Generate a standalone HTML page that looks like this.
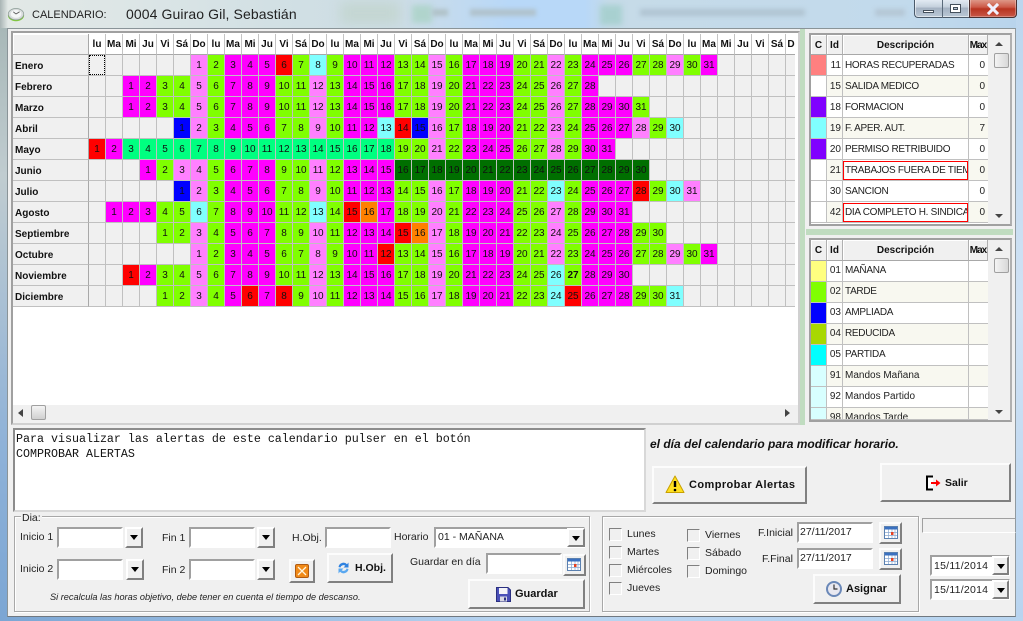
<!DOCTYPE html>
<html lang="es"><head><meta charset="utf-8"><title>Calendario</title>
<style>
html,body{margin:0;padding:0}
body{width:1023px;height:621px;overflow:hidden;position:relative;background:#b4d0ec;font:10px/12px "Liberation Sans",sans-serif;color:#111}
div,span,svg{position:absolute;white-space:nowrap}
.t{font-size:10.5px;line-height:12px;color:#222}
.in{background:#fff;box-sizing:border-box;border:2px solid;border-color:#a0a0a0 #fff #fff #a0a0a0}
.dd{box-sizing:border-box;width:18px;height:21px;background:#f0f0f0;border:2px solid;border-color:#fff #808080 #808080 #fff}
.dd:after{content:"";position:absolute;left:3px;top:6px;border:4px solid transparent;border-top:5px solid #000;border-bottom:0}
.btn{box-sizing:border-box;background:#f0f0f0;border:2px solid;border-color:#fcfcfc #808080 #808080 #fcfcfc;font-weight:bold;color:#111}
.gb{box-sizing:border-box;border:1px solid #a8a8a8;box-shadow:1px 1px 0 #fff,inset 1px 1px 0 #fff}
.cb{box-sizing:border-box;width:13px;height:13px;background:#f0f0f0;border:1px solid;border-color:#808080 #fff #fff #808080}
.hd{left:89px;top:34px;width:706px;height:21px;overflow:hidden;display:flex}
.hd i{flex:0 0 17px;box-sizing:border-box;height:21px;border-right:1px solid #c4c4c4;border-bottom:1px solid #a8a8a8;box-shadow:inset 1px 1px 0 #fff;font:bold 10px/22px "Liberation Sans",sans-serif;text-align:center;color:#111}
.rw{left:89px;width:706px;height:21px;overflow:hidden;box-sizing:border-box;border-bottom:1px solid #c0c0c0;background:repeating-linear-gradient(90deg,#f0f0f0 0 16px,#c0c0c0 16px 17px);font-size:0}
.rw b{display:inline-block;width:16px;height:20px;margin-right:1px;vertical-align:top;font:10px/21px "Liberation Sans",sans-serif;text-align:center;color:#111}
.m{background:#f0f}.g{background:#80ff00}.p{background:#ff80ff}.r{background:#f00}
.u{background:#00f}.c{background:#80ffff}.s{background:#00ff80}.d{background:#006f00}.o{background:#ff8000}
.lb{left:13px;width:76px;height:21px;box-sizing:border-box;background:#f0f0f0;border-right:1px solid #a8a8a8;border-bottom:1px solid #c0c0c0;font:bold 10px/24px "Liberation Sans",sans-serif;padding-left:2px;color:#111}
.sb{background:#f0f0f0}
.th{box-sizing:border-box;height:21px;background:#f0f0f0;border-right:1px solid #b0b0b0;border-bottom:1px solid #a8a8a8;box-shadow:inset 1px 1px 0 #fff;font:bold 10px/22px "Liberation Sans",sans-serif;text-align:center;color:#111}
.mx{font-size:10px;letter-spacing:-1px}
.tr{left:811px;width:177px;height:21px;overflow:hidden;box-sizing:border-box;border-bottom:1px solid #c0c0c0;font-size:10px;line-height:22px;color:#222}
.q{line-height:20px}
.tr span{top:0;height:20px}
.tr .k{left:0;width:15px}
.tr .n{left:17px;width:13px;text-align:right}
.tr .e{left:34px;width:124px;overflow:hidden}
.tr .x{left:158px;width:19px;text-align:right;box-sizing:border-box;padding-right:3px}
.tr .l1{left:15px;width:1px;background:#c0c0c0}.tr .l2{left:31px;width:1px;background:#c0c0c0}.tr .l3{left:157px;width:1px;background:#c0c0c0}
.w{background:#fff}.y{background:#f8f8f0}
.cp{letter-spacing:-.3px}
.rb{left:843px;width:125px;height:19px;box-sizing:border-box;border:1px solid #f00}
</style></head><body>

<!-- blurred desktop in title bar -->
<div style="left:0;top:0;width:1023px;height:28px;background:linear-gradient(90deg,#a8b4b4 0,#e2e8e6 8px,#dde6e6 120px,#d0dfe4 300px,#cddde6 400px,#b8d8f8 510px,#b8d8f8 585px,#c6dbe8 610px,#c2daec 900px,#b8d4ec 1023px)"></div>
<div style="left:340px;top:2px;width:60px;height:22px;background:#c4d6d2;filter:blur(6px)"></div>
<div style="left:412px;top:5px;width:20px;height:18px;background:#b0d4cc;filter:blur(3px)"></div>
<div style="left:432px;top:9px;width:16px;height:7px;background:#b0c2c8;filter:blur(2px)"></div>
<div style="left:470px;top:9px;width:66px;height:7px;background:#b0c2cc;filter:blur(2px)"></div>
<div style="left:600px;top:5px;width:22px;height:20px;background:#a8d0d0;filter:blur(3px)"></div>
<div style="left:640px;top:9px;width:165px;height:7px;background:#b0c4d2;filter:blur(2.5px)"></div>
<div style="left:875px;top:9px;width:30px;height:7px;background:#b4c6d4;filter:blur(2.5px)"></div>
<!-- side bands -->
<div style="left:0;top:28px;width:7px;height:593px;background:linear-gradient(180deg,#a8b8b8 0,#c0ccd0 25%,#8fb2d8 70%,#7ba6d4 100%)"></div>
<div style="left:1016px;top:0;width:7px;height:621px;background:linear-gradient(180deg,#bcd6ee,#d0e2f4 50%,#b8d4f0)"></div>
<div style="left:0;top:617px;width:1023px;height:4px;background:linear-gradient(90deg,#7ba6d4,#b8d4f0 50%,#b9d5f0)"></div>

<!-- caption buttons -->
<div style="left:914px;top:-2px;width:55px;height:20px;box-sizing:border-box;border:1px solid #4a5a6a;border-right:0;border-radius:0 0 0 4px;background:linear-gradient(180deg,#e6eef6,#c4d0dc 45%,#a4b2c2 50%,#bac8d6);box-shadow:inset 0 0 0 1px rgba(255,255,255,.55)"></div>
<div style="left:942px;top:0;width:1px;height:18px;background:#5a6a7a"></div>
<div style="left:923px;top:10px;width:11px;height:3px;box-sizing:border-box;background:#fff;border:1px solid #44505c"></div>
<div style="left:950px;top:4px;width:11px;height:9px;box-sizing:border-box;background:#fff;border:1px solid #44505c"></div>
<div style="left:953px;top:7px;width:5px;height:3px;box-sizing:border-box;background:#b8c6d4;border:1px solid #44505c"></div>
<div style="left:969px;top:-2px;width:48px;height:20px;box-sizing:border-box;border:1px solid #4a3030;border-radius:0 0 4px 0;background:linear-gradient(180deg,#e0a090,#cc5a48 45%,#b83420 55%,#c85848);box-shadow:inset 0 0 0 1px rgba(255,255,255,.3)"></div>
<svg style="left:986px;top:3px" width="14" height="12" viewBox="0 0 14 12"><path d="M2 1 L12 11 M12 1 L2 11" stroke="#fff" stroke-width="3"/><path d="M2 1 L12 11 M12 1 L2 11" stroke="#eef" stroke-width="2"/></svg>

<!-- app icon + title -->
<svg style="left:7px;top:7px" width="18" height="15" viewBox="0 0 20 16"><ellipse cx="10" cy="9" rx="9" ry="6.5" fill="#7fc93a"/><ellipse cx="10" cy="7.6" rx="8.6" ry="6.3" fill="#d8dcdc" stroke="#8a9a94" stroke-width=".8"/><ellipse cx="10" cy="7.4" rx="6" ry="4.4" fill="#f4f6f6"/><path d="M10 7.5 L14 5 M10 7.5 L7 5" stroke="#555" stroke-width="1"/></svg>
<span style="left:32px;top:8px;font-size:11px;line-height:14px;color:#222">CALENDARIO:</span>
<span style="left:126px;top:6px;font-size:14px;line-height:16px;color:#222;letter-spacing:.1px">0004 Guirao Gil, Sebastián</span>

<!-- client area -->
<div style="left:7px;top:28px;width:1009px;height:589px;box-sizing:border-box;background:#f0f0f0;border:1px solid #8a9498;border-right-color:#909aa0;border-bottom-color:#707880"></div>
<div style="left:800px;top:29px;width:5px;height:396px;background:#c0dcc0"></div>
<div style="left:806px;top:229px;width:207px;height:6px;background:#c0dcc0"></div>

<!-- calendar grid frame -->
<div style="left:11px;top:31px;width:789px;height:394px;box-sizing:border-box;background:#fff;border:2px solid;border-color:#a0a0a0 #d0d0d0 #d0d0d0 #a0a0a0"></div>
<div style="left:13px;top:34px;width:76px;height:21px;box-sizing:border-box;background:#f0f0f0;border-right:1px solid #a8a8a8;border-bottom:1px solid #a8a8a8;box-shadow:inset 1px 1px 0 #fff"></div>
<div class="hd"><i>lu</i><i>Ma</i><i>Mi</i><i>Ju</i><i>Vi</i><i>Sá</i><i>Do</i><i>lu</i><i>Ma</i><i>Mi</i><i>Ju</i><i>Vi</i><i>Sá</i><i>Do</i><i>lu</i><i>Ma</i><i>Mi</i><i>Ju</i><i>Vi</i><i>Sá</i><i>Do</i><i>lu</i><i>Ma</i><i>Mi</i><i>Ju</i><i>Vi</i><i>Sá</i><i>Do</i><i>lu</i><i>Ma</i><i>Mi</i><i>Ju</i><i>Vi</i><i>Sá</i><i>Do</i><i>lu</i><i>Ma</i><i>Mi</i><i>Ju</i><i>Vi</i><i>Sá</i><i>Do</i></div>

<div class="lb" style="top:55px">Enero</div>
<div class="rw" style="top:55px;padding-left:102px"><b class="p">1</b><b class="g">2</b><b class="m">3</b><b class="m">4</b><b class="m">5</b><b class="r">6</b><b class="g">7</b><b class="c">8</b><b class="g">9</b><b class="m">10</b><b class="m">11</b><b class="m">12</b><b class="g">13</b><b class="g">14</b><b class="p">15</b><b class="g">16</b><b class="m">17</b><b class="m">18</b><b class="m">19</b><b class="g">20</b><b class="g">21</b><b class="p">22</b><b class="g">23</b><b class="m">24</b><b class="m">25</b><b class="m">26</b><b class="g">27</b><b class="g">28</b><b class="p">29</b><b class="g">30</b><b class="m">31</b></div>
<div style="left:89px;top:55px;width:16px;height:20px;box-sizing:border-box;border:1px dotted #000"></div>

<div class="lb" style="top:76px">Febrero</div>
<div class="rw" style="top:76px;padding-left:34px"><b class="m">1</b><b class="m">2</b><b class="g">3</b><b class="g">4</b><b class="p">5</b><b class="g">6</b><b class="m">7</b><b class="m">8</b><b class="m">9</b><b class="g">10</b><b class="g">11</b><b class="p">12</b><b class="g">13</b><b class="m">14</b><b class="m">15</b><b class="m">16</b><b class="g">17</b><b class="g">18</b><b class="p">19</b><b class="g">20</b><b class="m">21</b><b class="m">22</b><b class="m">23</b><b class="g">24</b><b class="g">25</b><b class="p">26</b><b class="g">27</b><b class="m">28</b></div>

<div class="lb" style="top:97px">Marzo</div>
<div class="rw" style="top:97px;padding-left:34px"><b class="m">1</b><b class="m">2</b><b class="g">3</b><b class="g">4</b><b class="p">5</b><b class="g">6</b><b class="m">7</b><b class="m">8</b><b class="m">9</b><b class="g">10</b><b class="g">11</b><b class="p">12</b><b class="g">13</b><b class="m">14</b><b class="m">15</b><b class="m">16</b><b class="g">17</b><b class="g">18</b><b class="p">19</b><b class="g">20</b><b class="m">21</b><b class="m">22</b><b class="m">23</b><b class="g">24</b><b class="g">25</b><b class="p">26</b><b class="g">27</b><b class="m">28</b><b class="m">29</b><b class="m">30</b><b class="g">31</b></div>

<div class="lb" style="top:118px">Abril</div>
<div class="rw" style="top:118px;padding-left:85px"><b class="u">1</b><b class="p">2</b><b class="g">3</b><b class="m">4</b><b class="m">5</b><b class="m">6</b><b class="g">7</b><b class="g">8</b><b class="p">9</b><b class="g">10</b><b class="m">11</b><b class="m">12</b><b class="c">13</b><b class="r">14</b><b class="u">15</b><b class="p">16</b><b class="g">17</b><b class="m">18</b><b class="m">19</b><b class="m">20</b><b class="g">21</b><b class="g">22</b><b class="p">23</b><b class="g">24</b><b class="m">25</b><b class="m">26</b><b class="m">27</b><b class="p">28</b><b class="g">29</b><b class="c">30</b></div>

<div class="lb" style="top:139px">Mayo</div>
<div class="rw" style="top:139px"><b class="r">1</b><b class="m">2</b><b class="s">3</b><b class="s">4</b><b class="s">5</b><b class="s">6</b><b class="s">7</b><b class="s">8</b><b class="s">9</b><b class="s">10</b><b class="s">11</b><b class="s">12</b><b class="s">13</b><b class="s">14</b><b class="s">15</b><b class="s">16</b><b class="s">17</b><b class="s">18</b><b class="g">19</b><b class="g">20</b><b class="p">21</b><b class="g">22</b><b class="m">23</b><b class="m">24</b><b class="m">25</b><b class="g">26</b><b class="g">27</b><b class="p">28</b><b class="g">29</b><b class="m">30</b><b class="m">31</b></div>

<div class="lb" style="top:160px">Junio</div>
<div class="rw" style="top:160px;padding-left:51px"><b class="m">1</b><b class="g">2</b><b class="p">3</b><b class="p">4</b><b class="g">5</b><b class="m">6</b><b class="m">7</b><b class="m">8</b><b class="g">9</b><b class="g">10</b><b class="p">11</b><b class="g">12</b><b class="m">13</b><b class="m">14</b><b class="m">15</b><b class="d">16</b><b class="d">17</b><b class="d">18</b><b class="d">19</b><b class="d">20</b><b class="d">21</b><b class="d">22</b><b class="d">23</b><b class="d">24</b><b class="d">25</b><b class="d">26</b><b class="d">27</b><b class="d">28</b><b class="d">29</b><b class="d">30</b></div>

<div class="lb" style="top:181px">Julio</div>
<div class="rw" style="top:181px;padding-left:85px"><b class="u">1</b><b class="p">2</b><b class="g">3</b><b class="m">4</b><b class="m">5</b><b class="m">6</b><b class="g">7</b><b class="g">8</b><b class="p">9</b><b class="g">10</b><b class="m">11</b><b class="m">12</b><b class="m">13</b><b class="g">14</b><b class="g">15</b><b class="p">16</b><b class="g">17</b><b class="m">18</b><b class="m">19</b><b class="m">20</b><b class="g">21</b><b class="g">22</b><b class="c">23</b><b class="g">24</b><b class="m">25</b><b class="m">26</b><b class="m">27</b><b class="r">28</b><b class="g">29</b><b class="c">30</b><b class="p">31</b></div>

<div class="lb" style="top:202px">Agosto</div>
<div class="rw" style="top:202px;padding-left:17px"><b class="m">1</b><b class="m">2</b><b class="m">3</b><b class="g">4</b><b class="g">5</b><b class="c">6</b><b class="g">7</b><b class="m">8</b><b class="m">9</b><b class="m">10</b><b class="g">11</b><b class="g">12</b><b class="c">13</b><b class="g">14</b><b class="r">15</b><b class="o">16</b><b class="m">17</b><b class="g">18</b><b class="g">19</b><b class="p">20</b><b class="g">21</b><b class="m">22</b><b class="m">23</b><b class="m">24</b><b class="g">25</b><b class="g">26</b><b class="p">27</b><b class="g">28</b><b class="m">29</b><b class="m">30</b><b class="m">31</b></div>

<div class="lb" style="top:223px">Septiembre</div>
<div class="rw" style="top:223px;padding-left:68px"><b class="g">1</b><b class="g">2</b><b class="p">3</b><b class="g">4</b><b class="m">5</b><b class="m">6</b><b class="m">7</b><b class="g">8</b><b class="g">9</b><b class="p">10</b><b class="g">11</b><b class="m">12</b><b class="m">13</b><b class="m">14</b><b class="r">15</b><b class="o">16</b><b class="p">17</b><b class="g">18</b><b class="m">19</b><b class="m">20</b><b class="m">21</b><b class="g">22</b><b class="g">23</b><b class="p">24</b><b class="g">25</b><b class="m">26</b><b class="m">27</b><b class="m">28</b><b class="g">29</b><b class="g">30</b></div>

<div class="lb" style="top:244px">Octubre</div>
<div class="rw" style="top:244px;padding-left:102px"><b class="p">1</b><b class="g">2</b><b class="m">3</b><b class="m">4</b><b class="m">5</b><b class="g">6</b><b class="g">7</b><b class="p">8</b><b class="g">9</b><b class="m">10</b><b class="m">11</b><b class="r">12</b><b class="g">13</b><b class="g">14</b><b class="p">15</b><b class="g">16</b><b class="m">17</b><b class="m">18</b><b class="m">19</b><b class="g">20</b><b class="g">21</b><b class="p">22</b><b class="g">23</b><b class="m">24</b><b class="m">25</b><b class="m">26</b><b class="g">27</b><b class="g">28</b><b class="p">29</b><b class="g">30</b><b class="m">31</b></div>

<div class="lb" style="top:265px">Noviembre</div>
<div class="rw" style="top:265px;padding-left:34px"><b class="r">1</b><b class="m">2</b><b class="g">3</b><b class="g">4</b><b class="p">5</b><b class="g">6</b><b class="m">7</b><b class="m">8</b><b class="m">9</b><b class="g">10</b><b class="g">11</b><b class="p">12</b><b class="g">13</b><b class="m">14</b><b class="m">15</b><b class="m">16</b><b class="g">17</b><b class="g">18</b><b class="p">19</b><b class="g">20</b><b class="m">21</b><b class="m">22</b><b class="m">23</b><b class="g">24</b><b class="g">25</b><b class="c">26</b><b class="g" style="font-weight:bold">27</b><b class="m">28</b><b class="m">29</b><b class="m">30</b></div>

<div class="lb" style="top:286px">Diciembre</div>
<div class="rw" style="top:286px;padding-left:68px"><b class="g">1</b><b class="g">2</b><b class="p">3</b><b class="g">4</b><b class="m">5</b><b class="r">6</b><b class="m">7</b><b class="r">8</b><b class="g">9</b><b class="p">10</b><b class="g">11</b><b class="m">12</b><b class="m">13</b><b class="m">14</b><b class="g">15</b><b class="g">16</b><b class="p">17</b><b class="g">18</b><b class="m">19</b><b class="m">20</b><b class="m">21</b><b class="g">22</b><b class="g">23</b><b class="c">24</b><b class="r">25</b><b class="m">26</b><b class="m">27</b><b class="m">28</b><b class="g">29</b><b class="g">30</b><b class="c">31</b></div>

<!-- grid scrollbar -->
<div class="sb" style="left:13px;top:405px;width:785px;height:18px"></div>
<div style="left:18px;top:409px;border:4px solid transparent;border-right:5px solid #444;border-left:0"></div>
<div style="left:31px;top:405px;width:15px;height:15px;box-sizing:border-box;border:1px solid #a0a0a0;border-radius:2px;background:linear-gradient(180deg,#f4f4f4,#d0d0d0)"></div>
<div style="left:785px;top:409px;border:4px solid transparent;border-left:5px solid #444;border-right:0"></div>

<!-- panel 1 -->
<div style="left:809px;top:33px;width:203px;height:193px;box-sizing:border-box;background:#fff;border:2px solid;border-color:#a0a0a0 #b0b0b0 #a0a0a0 #a0a0a0;overflow:hidden"></div>
<div class="th" style="left:811px;top:35px;width:16px;height:20px">C</div>
<div class="th" style="left:827px;top:35px;width:16px;height:20px">Id</div>
<div class="th" style="left:843px;top:35px;width:126px;height:20px">Descripción</div>
<div class="th mx" style="left:969px;top:35px;width:19px;height:20px">Max</div>
<div class="sb" style="left:988px;top:35px;width:22px;height:189px"></div>
<div style="left:995px;top:42px;border:4px solid transparent;border-bottom:4px solid #444;border-top:0"></div>
<div style="left:994px;top:53px;width:15px;height:15px;box-sizing:border-box;border:1px solid #a0a0a0;border-radius:2px;background:linear-gradient(90deg,#f4f4f4,#d8d8d8)"></div>
<div style="left:995px;top:214px;border:4px solid transparent;border-top:4px solid #444;border-bottom:0"></div>

<div class="tr w" style="top:55px"><span class="k" style="background:#ff8080"></span><span class="l1"></span><span class="n">11</span><span class="l2"></span><span class="e cp">HORAS RECUPERADAS</span><span class="l3"></span><span class="x">0</span></div>
<div class="tr y" style="top:76px"><span class="k" style="background:#fff"></span><span class="l1"></span><span class="n">15</span><span class="l2"></span><span class="e cp">SALIDA MEDICO</span><span class="l3"></span><span class="x">0</span></div>
<div class="tr w" style="top:97px"><span class="k" style="background:#8000ff"></span><span class="l1"></span><span class="n">18</span><span class="l2"></span><span class="e cp">FORMACION</span><span class="l3"></span><span class="x">0</span></div>
<div class="tr y" style="top:118px"><span class="k" style="background:#80ffff"></span><span class="l1"></span><span class="n">19</span><span class="l2"></span><span class="e cp">F. APER. AUT.</span><span class="l3"></span><span class="x">7</span></div>
<div class="tr w" style="top:139px"><span class="k" style="background:#8000ff"></span><span class="l1"></span><span class="n">20</span><span class="l2"></span><span class="e cp">PERMISO RETRIBUIDO</span><span class="l3"></span><span class="x">0</span></div>
<div class="tr y" style="top:160px"><span class="k" style="background:#fff"></span><span class="l1"></span><span class="n">21</span><span class="l2"></span><span class="e cp" style="background:#fff">TRABAJOS FUERA DE TIEMPO</span><span class="l3"></span><span class="x">0</span></div>
<div class="rb" style="top:161px"></div>
<div class="tr w" style="top:181px"><span class="k" style="background:#fff"></span><span class="l1"></span><span class="n">30</span><span class="l2"></span><span class="e cp">SANCION</span><span class="l3"></span><span class="x">0</span></div>
<div class="tr y" style="top:202px"><span class="k" style="background:#fff"></span><span class="l1"></span><span class="n">42</span><span class="l2"></span><span class="e cp" style="background:#fff">DIA COMPLETO H. SINDICAL</span><span class="l3"></span><span class="x">0</span></div>
<div class="rb" style="top:203px"></div>

<!-- panel 2 -->
<div style="left:809px;top:238px;width:203px;height:184px;box-sizing:border-box;background:#fff;border:2px solid;border-color:#a0a0a0 #b0b0b0 #a0a0a0 #a0a0a0"></div>
<div class="th" style="left:811px;top:240px;width:16px">C</div>
<div class="th" style="left:827px;top:240px;width:16px">Id</div>
<div class="th" style="left:843px;top:240px;width:126px">Descripción</div>
<div class="th mx" style="left:969px;top:240px;width:19px">Max</div>
<div class="sb" style="left:988px;top:240px;width:22px;height:180px"></div>
<div style="left:995px;top:247px;border:4px solid transparent;border-bottom:4px solid #444;border-top:0"></div>
<div style="left:994px;top:258px;width:15px;height:15px;box-sizing:border-box;border:1px solid #a0a0a0;border-radius:2px;background:linear-gradient(90deg,#f4f4f4,#d8d8d8)"></div>
<div style="left:995px;top:410px;border:4px solid transparent;border-top:4px solid #444;border-bottom:0"></div>

<div class="tr q w" style="top:261px"><span class="k" style="background:#ffff80"></span><span class="l1"></span><span class="n">01</span><span class="l2"></span><span class="e cp">MAÑANA</span><span class="l3"></span></div>
<div class="tr q y" style="top:282px"><span class="k" style="background:#80ff00"></span><span class="l1"></span><span class="n">02</span><span class="l2"></span><span class="e cp">TARDE</span><span class="l3"></span></div>
<div class="tr q w" style="top:303px"><span class="k" style="background:#0000ff"></span><span class="l1"></span><span class="n">03</span><span class="l2"></span><span class="e cp">AMPLIADA</span><span class="l3"></span></div>
<div class="tr q y" style="top:324px"><span class="k" style="background:#a8d800"></span><span class="l1"></span><span class="n">04</span><span class="l2"></span><span class="e cp">REDUCIDA</span><span class="l3"></span></div>
<div class="tr q w" style="top:345px"><span class="k" style="background:#00ffff"></span><span class="l1"></span><span class="n">05</span><span class="l2"></span><span class="e cp">PARTIDA</span><span class="l3"></span></div>
<div class="tr q y" style="top:366px"><span class="k" style="background:#d8ffff"></span><span class="l1"></span><span class="n">91</span><span class="l2"></span><span class="e">Mandos Mañana</span><span class="l3"></span></div>
<div class="tr q w" style="top:387px"><span class="k" style="background:#d8ffff"></span><span class="l1"></span><span class="n">92</span><span class="l2"></span><span class="e">Mandos Partido</span><span class="l3"></span></div>
<div class="tr q y" style="top:408px;height:12px"><span class="k" style="background:#d8ffff"></span><span class="l1"></span><span class="n">98</span><span class="l2"></span><span class="e">Mandos Tarde</span><span class="l3"></span></div>

<!-- memo -->
<span style="left:650px;top:437px;font:italic bold 12px/14px 'Liberation Sans',sans-serif;color:#111">el día del calendario para modificar horario.</span>
<div style="left:13px;top:428px;width:633px;height:84px;box-sizing:border-box;background:#fff;border:2px solid;border-color:#8c8c8c #d8d8d8 #d8d8d8 #8c8c8c"></div>
<span style="left:16px;top:432px;font:11.67px/15px 'Liberation Mono',monospace;color:#111;white-space:pre">Para visualizar las alertas de este calendario pulser en el botón
COMPROBAR ALERTAS</span>

<!-- buttons -->
<div class="btn" style="left:652px;top:466px;width:155px;height:38px"></div>
<svg style="left:665px;top:475px" width="20" height="19" viewBox="0 0 20 19"><path d="M10 1 L19 17.5 H1 Z" fill="#ffe020" stroke="#c8a000" stroke-linejoin="round"/><path d="M10 6 V12" stroke="#000" stroke-width="2.4"/><circle cx="10" cy="15" r="1.3"/></svg>
<span style="left:689px;top:479px;font:bold 11px/13px 'Liberation Sans',sans-serif;color:#111;letter-spacing:.42px">Comprobar Alertas</span>

<div class="btn" style="left:880px;top:463px;width:131px;height:39px"></div>
<svg style="left:925px;top:475px" width="17" height="16" viewBox="0 0 17 16"><path d="M8 1.5 H2 V14.5 H8" fill="#fff" stroke="#000" stroke-width="2"/><path d="M6 8 H12" stroke="#f00" stroke-width="2"/><path d="M11 4.5 L15.5 8 L11 11.5 Z" fill="#f00"/></svg>
<span style="left:945px;top:477px;font:bold 10.5px/13px 'Liberation Sans',sans-serif;color:#111">Salir</span>

<!-- Dia group -->
<div class="gb" style="left:14px;top:516px;width:576px;height:96px"></div>
<span class="t" style="left:21px;top:512px;background:#f0f0f0;padding:0 1px">Dia:</span>
<span class="t" style="left:20px;top:531px">Inicio 1</span>
<div class="in" style="left:57px;top:527px;width:66px;height:21px"></div><div class="dd" style="left:125px;top:527px"></div>
<span class="t" style="left:20px;top:563px">Inicio 2</span>
<div class="in" style="left:57px;top:559px;width:66px;height:21px"></div><div class="dd" style="left:126px;top:559px"></div>
<span class="t" style="left:162px;top:532px">Fin 1</span>
<div class="in" style="left:189px;top:527px;width:66px;height:21px"></div><div class="dd" style="left:257px;top:527px"></div>
<span class="t" style="left:162px;top:564px">Fin 2</span>
<div class="in" style="left:189px;top:559px;width:66px;height:21px"></div><div class="dd" style="left:257px;top:559px"></div>
<span class="t" style="left:292px;top:532px">H.Obj.</span>
<div class="in" style="left:325px;top:527px;width:66px;height:21px"></div>
<span class="t" style="left:394px;top:531px">Horario</span>
<div class="in" style="left:434px;top:527px;width:151px;height:21px"></div>
<span class="t" style="left:438px;top:531px;font-size:10.5px;color:#222">01 - MAÑANA</span>
<div class="dd" style="left:567px;top:528px;height:19px"></div>

<div class="btn" style="left:289px;top:559px;width:26px;height:24px"></div>
<svg style="left:295px;top:564px" width="14" height="14" viewBox="0 0 14 14"><rect x=".5" y=".5" width="13" height="13" rx="1.5" fill="#f08a18" stroke="#b05a10"/><path d="M3 3 L11 11 M11 3 L3 11" stroke="#fff6e0" stroke-width="1.3"/></svg>
<div class="btn" style="left:327px;top:553px;width:66px;height:30px"></div>
<svg style="left:337px;top:561px" width="13" height="14" viewBox="0 0 13 14"><path d="M1.5 6 A5 5 0 0 1 10 3.2 L11.5 1.5 V6.5 H6.5 L8.3 4.8 A3 3 0 0 0 3.5 6.5 Z" fill="#2f82e0"/><path d="M11.5 8 A5 5 0 0 1 3 10.8 L1.5 12.5 V7.5 H6.5 L4.7 9.2 A3 3 0 0 0 9.5 7.5 Z" fill="#5aa8f0"/></svg>
<span style="left:355px;top:562px;font:bold 10.5px/13px 'Liberation Sans',sans-serif;color:#111">H.Obj.</span>

<span class="t" style="left:410px;top:556px">Guardar en día</span>
<div class="in" style="left:486px;top:553px;width:76px;height:21px"></div>
<div class="btn" style="left:563px;top:554px;width:23px;height:22px"></div>
<svg style="left:567px;top:558px" width="14" height="13" viewBox="0 0 14 13"><rect x=".5" y=".5" width="13" height="12" fill="#fff" stroke="#5a80b0"/><rect x="1" y="1" width="12" height="2.5" fill="#3a70c0"/><path d="M1 6.5 H13 M1 9.5 H13 M4.5 3.5 V12 M8 3.5 V12 M11 3.5 V12" stroke="#8aa8d0" stroke-width=".7"/><rect x="7" y="6" width="2.5" height="3" fill="#e84020"/></svg>
<div class="btn" style="left:468px;top:579px;width:117px;height:30px"></div>
<svg style="left:496px;top:587px" width="15" height="15" viewBox="0 0 15 15"><path d="M.5 .5 H12 L14.5 3 V14.5 H.5 Z" fill="#4a50b8" stroke="#2a2f80"/><rect x="3" y="1" width="8.5" height="6" fill="#f4f4f8"/><rect x="4" y="9.5" width="7" height="5" fill="#d8d8e4"/><rect x="8" y="10.5" width="2" height="3" fill="#2a2f80"/></svg>
<span style="left:515px;top:588px;font:bold 11px/13px 'Liberation Sans',sans-serif;color:#111">Guardar</span>
<span style="left:50px;top:591px;font:italic 9.2px/12px 'Liberation Sans',sans-serif;color:#222">Si recalcula las horas objetivo, debe tener en cuenta el tiempo de descanso.</span>

<!-- days group -->
<div class="gb" style="left:602px;top:516px;width:317px;height:96px"></div>
<div class="cb" style="left:609px;top:528px"></div><span class="t" style="left:627px;top:528px">Lunes</span>
<div class="cb" style="left:609px;top:546px"></div><span class="t" style="left:627px;top:546px">Martes</span>
<div class="cb" style="left:609px;top:564px"></div><span class="t" style="left:627px;top:564px">Miércoles</span>
<div class="cb" style="left:609px;top:582px"></div><span class="t" style="left:627px;top:582px">Jueves</span>
<div class="cb" style="left:687px;top:529px"></div><span class="t" style="left:705px;top:529px">Viernes</span>
<div class="cb" style="left:687px;top:547px"></div><span class="t" style="left:705px;top:547px">Sábado</span>
<div class="cb" style="left:687px;top:565px"></div><span class="t" style="left:705px;top:565px">Domingo</span>
<span class="t" style="left:758px;top:527px">F.Inicial</span>
<div class="in" style="left:797px;top:522px;width:76px;height:21px"></div>
<span class="t" style="left:800px;top:526px">27/11/2017</span>
<div class="btn" style="left:879px;top:522px;width:23px;height:22px"></div>
<svg style="left:884px;top:526px" width="14" height="13" viewBox="0 0 14 13"><rect x=".5" y=".5" width="13" height="12" fill="#fff" stroke="#5a80b0"/><rect x="1" y="1" width="12" height="2.5" fill="#3a70c0"/><path d="M1 6.5 H13 M1 9.5 H13 M4.5 3.5 V12 M8 3.5 V12 M11 3.5 V12" stroke="#8aa8d0" stroke-width=".7"/><rect x="7" y="6" width="2.5" height="3" fill="#e84020"/></svg>
<span class="t" style="left:762px;top:553px">F.Final</span>
<div class="in" style="left:797px;top:548px;width:76px;height:21px"></div>
<span class="t" style="left:800px;top:552px">27/11/2017</span>
<div class="btn" style="left:879px;top:548px;width:23px;height:22px"></div>
<svg style="left:884px;top:552px" width="14" height="13" viewBox="0 0 14 13"><rect x=".5" y=".5" width="13" height="12" fill="#fff" stroke="#5a80b0"/><rect x="1" y="1" width="12" height="2.5" fill="#3a70c0"/><path d="M1 6.5 H13 M1 9.5 H13 M4.5 3.5 V12 M8 3.5 V12 M11 3.5 V12" stroke="#8aa8d0" stroke-width=".7"/><rect x="7" y="6" width="2.5" height="3" fill="#e84020"/></svg>
<div class="btn" style="left:813px;top:574px;width:88px;height:30px"></div>
<svg style="left:826px;top:581px" width="16" height="16" viewBox="0 0 16 16"><circle cx="8" cy="8" r="7" fill="#e8e8f0" stroke="#6a88b8" stroke-width="2"/><path d="M8 3.5 V8 H11.5" stroke="#333" stroke-width="1.2" fill="none"/></svg>
<span style="left:846px;top:583px;font:bold 11px/13px 'Liberation Sans',sans-serif;color:#111">Asignar</span>

<!-- progress + dates -->
<div style="left:922px;top:518px;width:94px;height:15px;box-sizing:border-box;border:1px solid;border-color:#a0a0a0 transparent #fff #a0a0a0"></div>
<div class="in" style="left:930px;top:555px;width:80px;height:21px"></div>
<span class="t" style="left:934px;top:560px;letter-spacing:.25px">15/11/2014</span>
<div class="dd" style="left:992px;top:556px;width:17px;height:19px"></div>
<div class="in" style="left:930px;top:579px;width:80px;height:21px"></div>
<span class="t" style="left:934px;top:584px;letter-spacing:.25px">15/11/2014</span>
<div class="dd" style="left:992px;top:580px;width:17px;height:19px"></div>

</body></html>
